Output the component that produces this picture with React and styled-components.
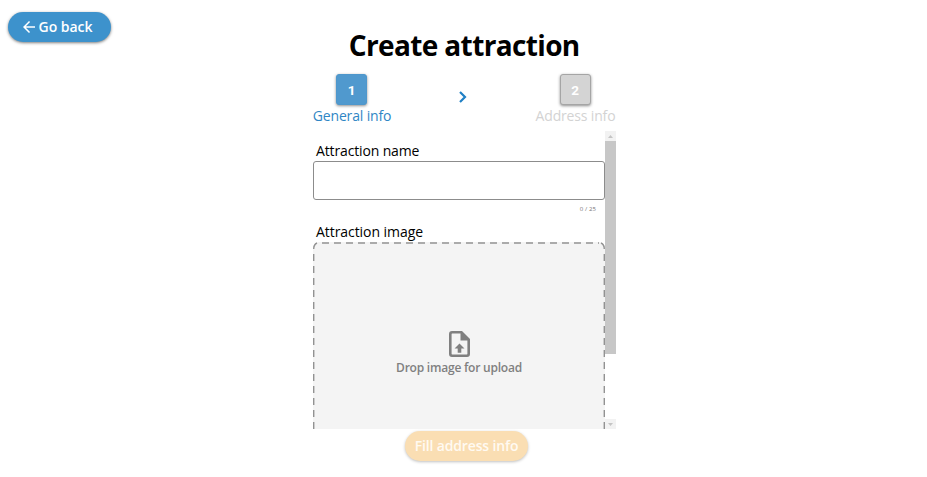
import React from "react";
import styled, { createGlobalStyle } from "styled-components";
import { MdArrowBack } from "react-icons/md";

const GlobalStyle = createGlobalStyle`
  * { box-sizing: border-box; }
  html, body { margin: 0; background: #fff; overflow: hidden; }
  body { font-family: "Open Sans", "Noto Sans", sans-serif; color: #000; }
`;

const Page = styled.div`
  display: grid;
  grid-template-columns: 313px 302.5px 1fr;
  height: 477px;
`;

const Side = styled.div`
  padding: 12px 8px;
`;

const Pill = styled.button`
  display: flex;
  align-items: center;
  justify-content: center;
  gap: 1px;
  width: ${(p) => p.$width}px;
  height: 30px;
  padding: 0 ${(p) => (p.$muted ? 0 : 7)}px 0 0;
  border: 0;
  border-radius: 15px;
  font: 600 14px/30px "Open Sans", sans-serif;
  letter-spacing: ${(p) => p.$spacing || 0}px;
  white-space: nowrap;
  color: ${(p) => (p.$muted ? "#fffaf2" : "#fff")};
  background: ${(p) => (p.$muted ? "#fadeb3" : "#3d92cc")};
  box-shadow: 0 1px 3px ${(p) => (p.$muted ? "rgba(0,0,0,.25)" : "rgba(0,0,0,.5)")};
`;

const Main = styled.main`
  display: flex;
  flex-direction: column;
`;

const Title = styled.h1`
  margin: 25px 0 0;
  height: 49px;
  font-size: 28px;
  line-height: 41px;
  font-weight: 700;
  letter-spacing: -0.64px;
  text-align: center;
  white-space: nowrap;
`;

const Steps = styled.div`
  display: flex;
  justify-content: space-between;
  height: 57px;
`;

const Step = styled.div`
  display: flex;
  flex-direction: column;
  align-items: center;
  width: ${(p) => p.$width}px;
  color: ${(p) => (p.$active ? "#2f86c5" : "#d3d3d3")};
  font-size: 14px;
  line-height: 20px;
  letter-spacing: -0.16px;
  white-space: nowrap;
`;

const StepBadge = styled.div`
  width: 31px;
  height: 31px;
  margin: 0 1px 1px 0;
  border-radius: 3px;
  border: 1px solid ${(p) => (p.$active ? "#4e97cc" : "#a5a5a5")};
  background: ${(p) => (p.$active ? "#5099ce" : "#d4d4d4")};
  box-shadow: 0 1px 3px rgba(0, 0, 0, 0.45);
  color: #fff;
  font: 700 13.5px/31px Roboto, sans-serif;
  letter-spacing: 0;
  text-align: center;
`;

const StepArrow = styled.svg`
  width: 8px;
  height: 12px;
  margin: 17px 0 0 -1px;
  fill: none;
  stroke: #2080c5;
  stroke-width: 2.2;
`;

const Scroller = styled.section`
  display: flex;
  height: 298px;
  overflow: hidden;
`;

const Fields = styled.div`
  width: 292px;
  flex: none;
`;

const Label = styled.label`
  display: block;
  height: ${(p) => p.$height}px;
  padding: ${(p) => p.$top}px 0 0 3px;
  font-size: 14px;
  line-height: 20px;
  letter-spacing: ${(p) => p.$spacing}px;
`;

const TextInput = styled.input`
  display: block;
  width: 292px;
  height: 39px;
  border: 1px solid #8c8c8c;
  border-radius: 3px;
  background: #fff;
  outline: 0;
`;

const Counter = styled.div`
  height: 22px;
  padding: 4px 9px 0 0;
  text-align: right;
  font-size: 6px;
  line-height: 10px;
  letter-spacing: 0.1px;
  color: #777;
`;

const DropZone = styled.div`
  position: relative;
  display: flex;
  flex-direction: column;
  align-items: center;
  height: 230px;
  padding: 87px 0 0 0;
  border-radius: 6px;
  background: #f4f4f4;
  color: #808080;
  font-size: 12px;
  font-weight: 600;
  line-height: 18px;
  letter-spacing: -0.22px;
`;

const DashedOutline = styled.svg`
  position: absolute;
  inset: 0;
  width: 293px;
  height: 230px;
  fill: none;
  stroke: #929292;
  stroke-width: 1.4;
  stroke-dasharray: 7 5;
`;

const UploadIcon = styled.svg`
  width: 21px;
  height: 26px;
  margin: 2px 0 2px;
  fill: #808080;
`;

const Scrollbar = styled.div`
  display: flex;
  flex-direction: column;
  width: 10.5px;
  flex: none;
`;

const ScrollButton = styled.div`
  display: flex;
  align-items: center;
  justify-content: center;
  height: 10px;
  background: #f2f2f2;

  svg {
    width: 5px;
    height: 3px;
    fill: #c4c4c4;
  }
`;

const Track = styled.div`
  flex: 1;
`;

const Thumb = styled.div`
  height: 213px;
  background: #c7c7c7;
`;

const Footer = styled.footer`
  display: flex;
  padding: 2.4px 0 0 92px;
`;

export default function App() {
  return (
    <Page>
      <GlobalStyle />
      <Side>
        <Pill $width={103} $spacing={-0.05}>
          <MdArrowBack size={18} />
          Go back
        </Pill>
      </Side>
      <Main>
        <Title>Create attraction</Title>
        <Steps>
          <Step $active $width={78}>
            <StepBadge $active>1</StepBadge>
            General info
          </Step>
          <StepArrow viewBox="0 0 8 12">
            <path d="M1 1L6 6L1 11" />
          </StepArrow>
          <Step $width={80}>
            <StepBadge>2</StepBadge>
            Address info
          </Step>
        </Steps>
        <Scroller>
          <Fields>
            <Label htmlFor="name" $height={30} $top={10} $spacing={-0.14}>Attraction name</Label>
            <TextInput id="name" maxLength={25} />
            <Counter>0 / 25</Counter>
            <Label $height={20} $top={0} $spacing={-0.06}>Attraction image</Label>
            <DropZone>
              <DashedOutline>
                <path d="M6 1H286" strokeDashoffset="-3" />
                <path d="M0.7 7Q0.7 2.5 4 1M288 1Q291.3 2.5 291.3 7" strokeDasharray="none" />
                <path d="M0.7 12V230M291.3 12V230" />
              </DashedOutline>
              <UploadIcon viewBox="0 0 21 26">
                <path
                  fillRule="evenodd"
                  d="M3 0H13L21 8V23Q21 26 18 26H3Q0 26 0 23V3Q0 0 3 0ZM3.2 2.6Q2.6 2.6 2.6 3.2V22.8Q2.6 23.4 3.2 23.4H17.8Q18.4 23.4 18.4 22.8V9.5H11.5V2.6Z"
                />
                <path d="M10.5 12.5L15.5 17.6H12.3V21.8H8.7V17.6H5.5Z" />
              </UploadIcon>
              Drop image for upload
            </DropZone>
          </Fields>
          <Scrollbar>
            <ScrollButton><svg viewBox="0 0 5 3"><path d="M0 3 2.5 0 5 3z" /></svg></ScrollButton>
            <Track><Thumb /></Track>
            <ScrollButton><svg viewBox="0 0 5 3"><path d="M0 0 2.5 3 5 0z" /></svg></ScrollButton>
          </Scrollbar>
        </Scroller>
        <Footer>
          <Pill $muted $width={123} $spacing={-0.15}>Fill address info</Pill>
        </Footer>
      </Main>
    </Page>
  );
}
